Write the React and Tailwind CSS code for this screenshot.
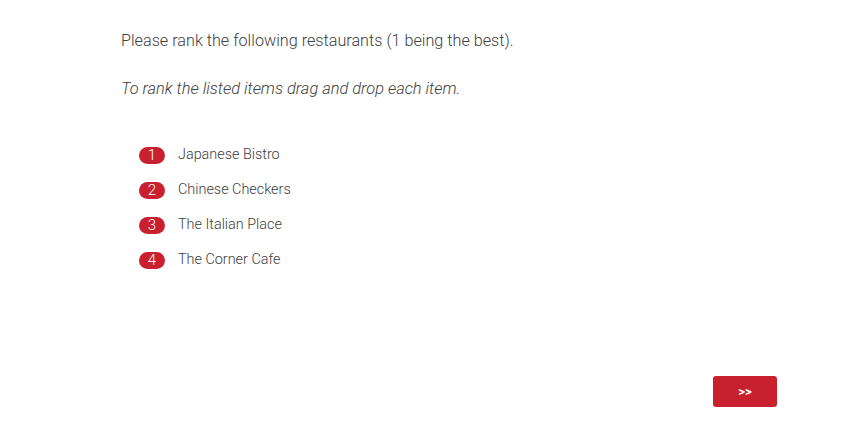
import React from 'react';

const restaurants = ['Japanese Bistro', 'Chinese Checkers', 'The Italian Place', 'The Corner Cafe'];

export default function App() {
  return (
    <div
      className="relative h-[425px] w-[850px] bg-white text-[#404040]"
      style={{ fontFamily: 'Roboto, "Liberation Sans", sans-serif' }}
    >
      <div className="pl-[121px] pt-[30px]">
        <p className="text-[16.2px] font-light leading-[22px]">
          Please rank the following restaurants (1 being the best).
        </p>
        <p className="mt-[26px] text-[16.4px] font-light italic leading-[22px]">
          To rank the listed items drag and drop each item.
        </p>

        <ul className="mt-[44px] ml-[18px] flex flex-col gap-[13px]">
          {restaurants.map((name, i) => (
            <li key={name} className="flex h-[22px] items-center">
              <span className="flex h-[17px] w-[26px] items-center justify-center rounded-full bg-[#c8202f] text-[15px] font-light leading-none text-white">
                {i + 1}
              </span>
              <span className="ml-[13px] text-[14.4px] font-light">{name}</span>
            </li>
          ))}
        </ul>
      </div>

      <div className="absolute left-[713px] top-[376px]">
        <button className="flex h-[31px] w-[64px] items-center justify-center rounded-[3px] bg-[#c8202f] text-[13px] font-bold text-white">
          &gt;&gt;
        </button>
      </div>
    </div>
  );
}
